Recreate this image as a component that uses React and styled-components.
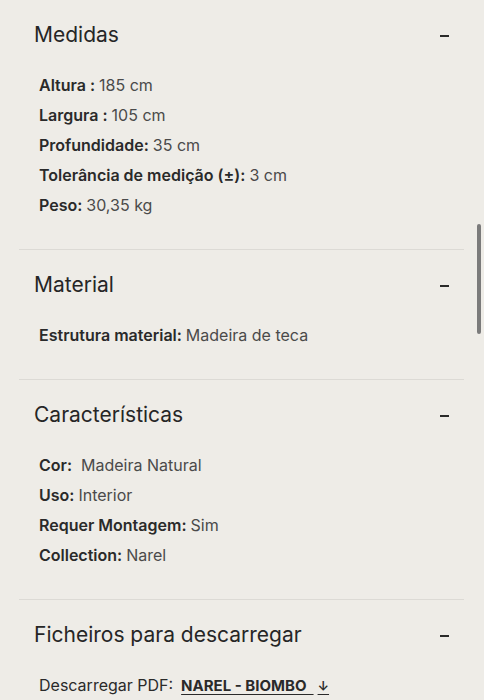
import React from 'react';
import styled, { createGlobalStyle } from 'styled-components';

const GlobalStyle = createGlobalStyle`
    html, body {
        margin: 0;
        padding: 0;
        background: #eeece7;
        overflow: hidden;
    }
    body {
        font-family: Inter, "Noto Sans", "Liberation Sans", sans-serif;
        color: #2a2a2a;
    }
`

const Page = styled.div`
    width: 484px;
    height: 700px;
    padding: 0 20px 0 19px;
    box-sizing: border-box;
`

const Section = styled.section`
    padding: 20px 0 29px;
    border-bottom: ${props => props.last ? 'none' : '1.5px solid #dcdad5'};
`

const Header = styled.div`
    display: flex;
    align-items: center;
    justify-content: space-between;
    height: 30px;
    padding: 0 15px;
`

const Title = styled.h2`
    margin: 0;
    font-size: 21px;
    font-weight: 400;
    line-height: 30px;
    color: #262626;
`

const Minus = styled.span`
    display: block;
    width: 9px;
    height: 2px;
    background: #2a2a2a;
    margin-top: 2px;
`

const List = styled.ul`
    list-style: none;
    margin: 20px 0 0;
    padding: 0 20px;
`

const Row = styled.li`
    height: 30px;
    line-height: 30px;
    font-size: 16px;
    white-space: nowrap;
`

const Label = styled.span`
    font-weight: ${props => props.plain ? 400 : 600};
    color: #2a2a2a;
    margin-right: ${props => props.gap || 4}px;
`

const Value = styled.span`
    font-weight: 400;
    color: #4a4a4a;
`

const Link = styled.a`
    font-weight: 700;
    font-size: 15px;
    color: #2a2a2a;
    text-decoration: underline;
    text-underline-offset: 3px;
`

const Arrow = styled.a`
    font-size: 13px;
    font-weight: 600;
    color: #2a2a2a;
    margin-left: 4px;
    text-decoration: underline;
    text-underline-offset: 3px;
`

const Scrollbar = styled.div`
    position: fixed;
    top: 224px;
    right: 3px;
    width: 4px;
    height: 110px;
    border-radius: 2px;
    background: #7b7b7b;
`

const sections = [
    {
        title: 'Medidas',
        rows: [
            ['Altura :', '185 cm'],
            ['Largura :', '105 cm'],
            ['Profundidade:', '35 cm'],
            ['Tolerância de medição (±):', '3 cm'],
            ['Peso:', '30,35 kg'],
        ],
    },
    {
        title: 'Material',
        rows: [['Estrutura material:', 'Madeira de teca']],
    },
    {
        title: 'Características',
        rows: [
            ['Cor:', 'Madeira Natural', 9],
            ['Uso:', 'Interior'],
            ['Requer Montagem:', 'Sim'],
            ['Collection:', 'Narel'],
        ],
    },
]

export default function App() {
    return (
        <Page>
            <GlobalStyle />
            {sections.map(s => (
                <Section key={s.title}>
                    <Header>
                        <Title>{s.title}</Title>
                        <Minus />
                    </Header>
                    <List>
                        {s.rows.map(([label, value, gap]) => (
                            <Row key={label}>
                                <Label gap={gap}>{label}</Label>
                                <Value>{value}</Value>
                            </Row>
                        ))}
                    </List>
                </Section>
            ))}
            <Section last>
                <Header>
                    <Title>Ficheiros para descarregar</Title>
                    <Minus />
                </Header>
                <List>
                    <Row>
                        <Label plain gap={8}>Descarregar PDF:</Label>
                        <Link href="#">NAREL - BIOMBO&nbsp;&nbsp;</Link>
                        <Arrow href="#">↓</Arrow>
                    </Row>
                </List>
            </Section>
            <Scrollbar />
        </Page>
    )
}
